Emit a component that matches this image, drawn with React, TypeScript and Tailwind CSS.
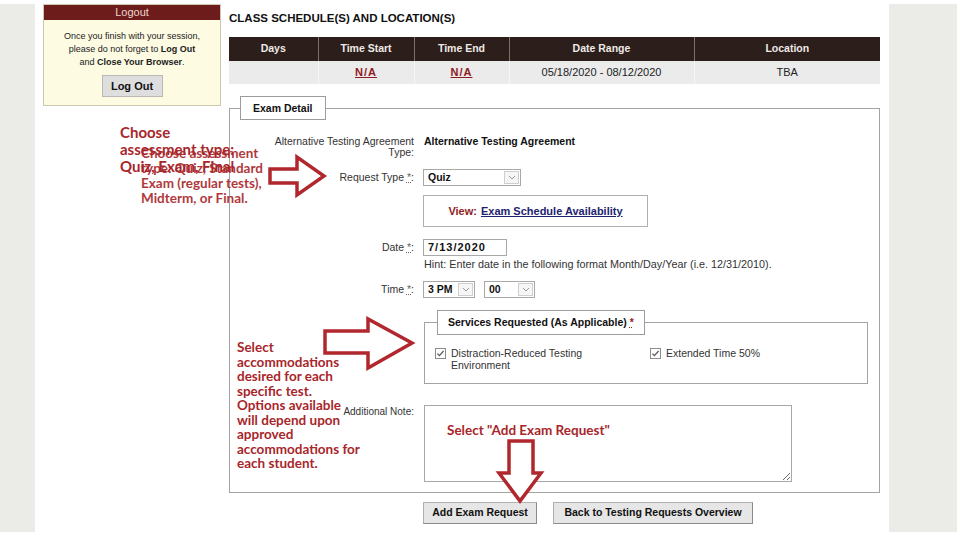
function Chevron() {
  return (
    <svg width="8" height="5" viewBox="0 0 8 5">
      <path d="M1 1l3 3 3-3" fill="none" stroke="#9a9a9a" strokeWidth="1" />
    </svg>
  );
}

function Select({ value, width }: { value: string; width: string }) {
  return (
    <div className={`flex h-[17px] items-center justify-between border border-[#a8a8a8] bg-white pl-[4px] pr-[1px] ${width}`}>
      <span className="text-[10.5px] font-bold text-[#111]">{value}</span>
      <span className="flex h-[13px] w-[15px] items-center justify-center border border-[#cfcfcf] bg-[#f6f6f6]">
        <Chevron />
      </span>
    </div>
  );
}

function Req() {
  return <span className="text-[#666] underline decoration-dotted">*</span>;
}

function Check() {
  return (
    <svg width="11" height="11" viewBox="0 0 11 11" className="shrink-0">
      <rect x="0.5" y="0.5" width="10" height="10" fill="white" stroke="#8c8c8c" />
      <path d="M2.4 5.6l2 2 4.2-4.6" fill="none" stroke="#555" strokeWidth="1.2" />
    </svg>
  );
}

function Arrow({ points }: { points: string }) {
  return (
    <svg className="absolute left-0 top-0" width="960" height="544" viewBox="0 0 960 544">
      <polygon points={points} fill="white" stroke="#b0282d" strokeWidth="3.5" strokeLinejoin="miter" />
    </svg>
  );
}

export default function App() {
  const cols = [
    { label: 'Days', w: 'w-[89px]', value: '' },
    { label: 'Time Start', w: 'w-[96px]', value: 'N/A' },
    { label: 'Time End', w: 'w-[95px]', value: 'N/A' },
    { label: 'Date Range', w: 'w-[185px]', value: '05/18/2020 - 08/12/2020' },
    { label: 'Location', w: 'w-[186px]', value: 'TBA' }
  ];

  return (
    <div className="relative h-[544px] w-[960px] overflow-hidden bg-white font-['Liberation_Sans',Arial,sans-serif] text-[#222]">
      <div className="flex">
        {/* left gray strip */}
        <div className="mt-[4px] h-[528px] w-[35px] bg-[#ebebe8]" />

        {/* page content */}
        <div className="flex w-[854px]">
          {/* logout box */}
          <div className="ml-[8px] mt-[4px] h-[102px] w-[178px] border border-[#cdc8b2] bg-[#fdfbe2]">
            <div className="flex h-[15px] items-center justify-center bg-[#6d1c1b] text-[11px] text-[#ecd6cf]">
              Logout
            </div>
            <div className="flex flex-col items-center pt-[10px] text-center text-[9px] leading-[13px] text-[#222]">
              <div>Once you finish with your session,</div>
              <div>
                please do not forget to <b>Log Out</b>
              </div>
              <div>
                and <b>Close Your Browser</b>.
              </div>
              <button className="mt-[6px] h-[22px] w-[61px] border border-[#b8b8b8] bg-[#dedede] text-[11px] font-bold text-[#111]">
                Log Out
              </button>
            </div>
          </div>

          {/* main column */}
          <div className="ml-[8px] w-[651px]">
            <h2 className="mt-[11px] text-[11.5px] font-bold leading-[14px] text-[#111]">
              CLASS SCHEDULE(S) AND LOCATION(S)
            </h2>

            <table className="mt-[12px] w-[651px] border-collapse text-[10.5px]">
              <thead>
                <tr>
                  {cols.map((c, i) => (
                    <th
                      key={c.label}
                      className={`h-[24px] bg-[#2c1e1b] p-0 text-center font-bold text-[#eeeae6] ${c.w} ${i > 0 ? 'border-l border-[#7d716c]' : ''}`}
                    >
                      {c.label}
                    </th>
                  ))}
                </tr>
              </thead>
              <tbody>
                <tr>
                  {cols.map((c, i) => (
                    <td
                      key={c.label}
                      className={`h-[23px] bg-[#ebebeb] p-0 text-center text-[11px] ${i > 0 ? 'border-l border-[#f6f6f6]' : ''}`}
                    >
                      {c.value === 'N/A' ? (
                        <span className="font-bold tracking-[1px] text-[#8e1c1f] underline">N/A</span>
                      ) : (
                        <span className="text-[#222]">{c.value}</span>
                      )}
                    </td>
                  ))}
                </tr>
              </tbody>
            </table>

            {/* exam detail */}
            <fieldset className="mt-[12px] border border-[#a3a3a3] px-[10px] pb-[10px]">
              <legend className="border border-[#9c9c9c] bg-white px-[12px] text-[10.5px] font-bold leading-[22px] text-[#111]">
                Exam Detail
              </legend>

              <div className="flex flex-col text-[10.5px]">
                <div className="mt-[16px] flex leading-[11px]">
                  <div className="w-[174px] text-right text-[#333]">
                    Alternative Testing Agreement
                    <br />
                    Type:
                  </div>
                  <div className="ml-[10px] font-bold text-[#111]">Alternative Testing Agreement</div>
                </div>

                <div className="mt-[11px] flex items-center">
                  <div className="w-[174px] text-right text-[#333]">
                    Request Type <Req />:
                  </div>
                  <div className="ml-[9px]">
                    <Select value="Quiz" width="w-[98px]" />
                  </div>
                </div>

                <div className="mt-[9px] flex">
                  <div className="w-[174px]" />
                  <div className="ml-[9px] flex h-[32px] w-[225px] items-center justify-center gap-[4px] border border-[#b0b0b0] text-[11px] font-bold">
                    <span className="text-[#8e1c1f]">View:</span>
                    <span className="text-[#22236e] underline">Exam Schedule Availability</span>
                  </div>
                </div>

                <div className="mt-[12px] flex items-center">
                  <div className="w-[174px] text-right text-[#333]">
                    Date <Req />:
                  </div>
                  <div className="ml-[9px] flex h-[17px] w-[84px] items-center border border-[#a8a8a8] pl-[4px] text-[11px] font-bold tracking-[1px] text-[#111]">
                    7/13/2020
                  </div>
                </div>

                <div className="mt-[3px] flex leading-[11px]">
                  <div className="w-[174px]" />
                  <div className="ml-[10px] text-[10.8px] text-[#333]">
                    Hint: Enter date in the following format Month/Day/Year (i.e. 12/31/2010).
                  </div>
                </div>

                <div className="mt-[11px] flex items-center">
                  <div className="w-[174px] text-right text-[#333]">
                    Time <Req />:
                  </div>
                  <div className="ml-[9px] flex gap-[9px]">
                    <Select value="3 PM" width="w-[52px]" />
                    <Select value="00" width="w-[51px]" />
                  </div>
                </div>

                <fieldset className="ml-[184px] mt-[12px] w-[444px] border border-[#a3a3a3] pb-[12px] pl-[12px]">
                  <legend className="border border-[#9c9c9c] bg-white px-[10px] text-[10.5px] font-bold leading-[23px] text-[#111]">
                    Services Requested (As Applicable) <span className="text-[#8e1c1f] underline decoration-dotted">*</span>
                  </legend>
                  <div className="-ml-[2px] mt-[13px] grid grid-cols-[215px_1fr] text-[10.5px] leading-[11.5px] text-[#333]">
                    <div className="flex gap-[5px]">
                      <Check />
                      <span>
                        Distraction-Reduced Testing
                        <br />
                        Environment
                      </span>
                    </div>
                    <div className="flex gap-[5px]">
                      <Check />
                      <span>Extended Time 50%</span>
                    </div>
                  </div>
                </fieldset>

                <div className="mt-[21px] flex">
                  <div className="w-[174px] pt-[1px] text-right text-[10px] leading-[11px] text-[#333]">
                    Additional Note:
                  </div>
                  <textarea
                    readOnly
                    className="ml-[10px] h-[77px] w-[368px] resize border border-[#a8a8a8] bg-white"
                  />
                </div>
              </div>
            </fieldset>

            <div className="mt-[9px] flex gap-[16px] pl-[194px]">
              <button className="h-[22px] w-[114px] border border-[#b0b0b0] border-b-[#8a8a8a] border-r-[#8a8a8a] bg-[#e6e6e6] text-[10.5px] font-bold text-[#111]">
                Add Exam Request
              </button>
              <button className="h-[22px] w-[200px] border border-[#b0b0b0] border-b-[#8a8a8a] border-r-[#8a8a8a] bg-[#e6e6e6] text-[10.5px] font-bold text-[#111]">
                Back to Testing Requests Overview
              </button>
            </div>
          </div>
        </div>

        {/* right gray strip */}
        <div className="mt-[4px] h-[528px] w-[68px] bg-[#ebebe8]" />
      </div>

      {/* annotations laid over the form */}
      <Arrow points="270,169 297,169 297,157 324,176 297,195 297,183 270,183" />
      <Arrow points="325,331 368,331 368,319 412,343 368,368 368,353 325,353" />
      <Arrow points="509,441 533,441 533,473 541,473 520,501 499,473 509,473" />

      <div className="absolute left-[141px] top-[146px] font-['Lato',sans-serif] text-[13.5px] font-bold leading-[15px] text-[#b0393d]">
        Choose assessment
        <br />
        type: Quiz, Standard
        <br />
        Exam (regular tests),
        <br />
        Midterm, or Final.
      </div>
      <div className="absolute left-[120px] top-[124px] font-['Lato',sans-serif] text-[15px] font-bold leading-[17px] text-[#a8262b]">
        Choose
        <br />
        assessment type:
        <br />
        Quiz, Exam, Final
      </div>

      <div className="absolute left-[237px] top-[340px] font-['Lato',sans-serif] text-[13.5px] font-bold leading-[14.5px] text-[#a8262b]">
        Select
        <br />
        accommodations
        <br />
        desired for each
        <br />
        specific test.
        <br />
        Options available
        <br />
        will depend upon
        <br />
        approved
        <br />
        accommodations for
        <br />
        each student.
      </div>

      <div className="absolute left-[447px] top-[422px] font-['Lato',sans-serif] text-[13.5px] font-bold leading-[16px] text-[#a8262b]">
        Select "Add Exam Request"
      </div>
    </div>
  );
}
